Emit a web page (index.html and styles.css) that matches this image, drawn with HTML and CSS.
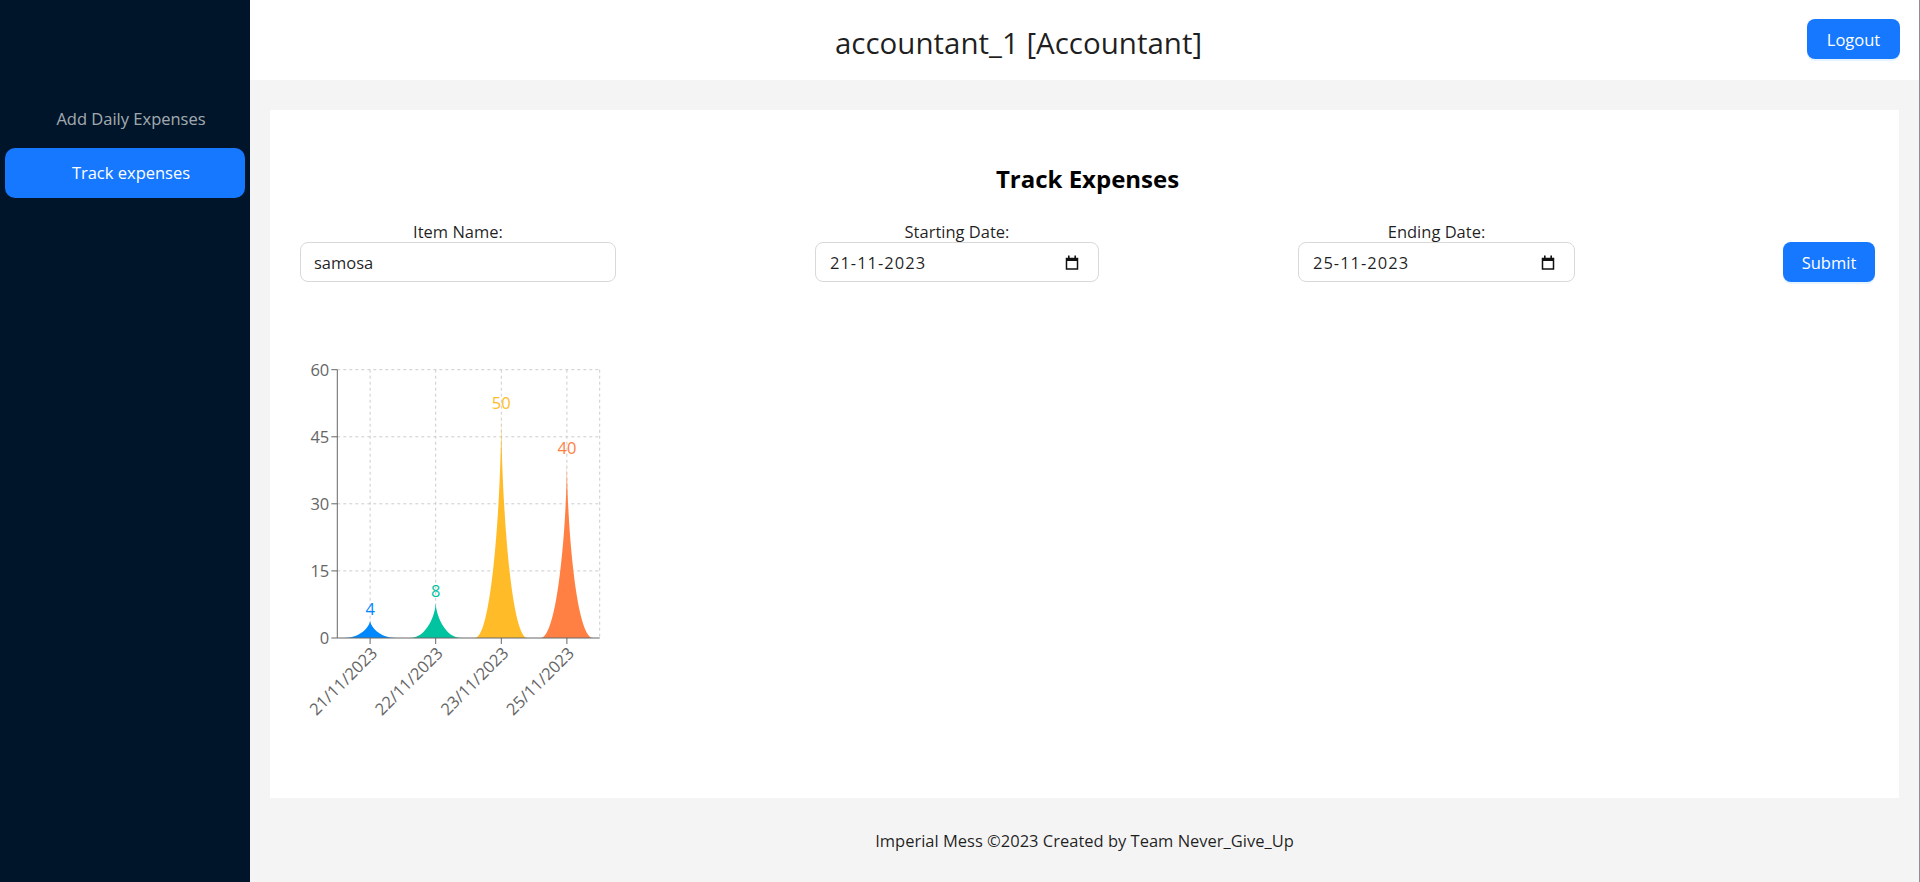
FILE: index.html
```html
<!DOCTYPE html>
<html lang="en">
<head>
<meta charset="utf-8">
<title>Track Expenses</title>
<link rel="stylesheet" href="styles.css">
</head>
<body>
<div class="layout">
  <aside class="sider">
    <nav class="menu">
      <div class="menu-item">Add Daily Expenses</div>
      <div class="menu-item active">Track expenses</div>
    </nav>
  </aside>
  <div class="main">
    <header class="header">
      <div class="user-title">accountant_1 [Accountant]</div>
      <button class="btn btn-logout">Logout</button>
    </header>
    <main class="content">
      <section class="card">
        <h2 class="card-title">Track Expenses</h2>
        <div class="filter-row">
          <div class="field">
            <label class="field-label">Item Name:</label>
            <input class="input input-item" type="text" value="samosa">
          </div>
          <div class="field field-date">
            <label class="field-label">Starting Date:</label>
            <div class="input date-input date-start">
              <span>21-11-2023</span>
              <svg class="cal" width="14" height="15" viewBox="0 0 14 15"><rect x="1.5" y="3.5" width="11" height="10.5" fill="none" stroke="#111" stroke-width="1.5"/><rect x="1" y="3" width="12" height="3" fill="#111"/><rect x="3" y="0.5" width="1.6" height="3" fill="#111"/><rect x="9.4" y="0.5" width="1.6" height="3" fill="#111"/></svg>
            </div>
          </div>
          <div class="field field-date">
            <label class="field-label">Ending Date:</label>
            <div class="input date-input date-end">
              <span>25-11-2023</span>
              <svg class="cal" width="14" height="15" viewBox="0 0 14 15"><rect x="1.5" y="3.5" width="11" height="10.5" fill="none" stroke="#111" stroke-width="1.5"/><rect x="1" y="3" width="12" height="3" fill="#111"/><rect x="3" y="0.5" width="1.6" height="3" fill="#111"/><rect x="9.4" y="0.5" width="1.6" height="3" fill="#111"/></svg>
            </div>
          </div>
          <button class="btn btn-submit">Submit</button>
        </div>
        <svg class="chart" width="320" height="400" viewBox="301 350 320 400">
          <g stroke="#ccc" stroke-dasharray="3 3" fill="none">
            <line x1="338.3" y1="370.7" x2="600.7" y2="370.7"/>
            <line x1="338.3" y1="437.8" x2="600.7" y2="437.8"/>
            <line x1="338.3" y1="504.8" x2="600.7" y2="504.8"/>
            <line x1="338.3" y1="571.9" x2="600.7" y2="571.9"/>
            <line x1="371.1" y1="370.7" x2="371.1" y2="639"/>
            <line x1="436.7" y1="370.7" x2="436.7" y2="639"/>
            <line x1="502.3" y1="370.7" x2="502.3" y2="639"/>
            <line x1="567.9" y1="370.7" x2="567.9" y2="639"/>
            <line x1="600.7" y1="370.7" x2="600.7" y2="639"/>
          </g>
          <path fill="#0088FE" d="M344.85,639 C362.35,639 371.1,627.1 371.1,621.1 C371.1,627.1 379.85,639 397.35,639 Z"/>
          <path fill="#00C49F" d="M410.45,639 C427.95,639 436.7,615.1 436.7,603.2 C436.7,615.1 445.45,639 462.95,639 Z"/>
          <path fill="#FFBB28" d="M476.05,639 C493.55,639 502.3,490 502.3,415.4 C502.3,490 511.05,639 528.55,639 Z"/>
          <path fill="#FF8042" d="M541.65,639 C559.15,639 567.9,519.7 567.9,460.1 C567.9,519.7 576.65,639 594.15,639 Z"/>
          <g class="bar-labels" text-anchor="middle">
            <text x="371.1" y="615.6" fill="#0088FE">4</text>
            <text x="436.7" y="597.7" fill="#00C49F">8</text>
            <text x="502.3" y="409.9" fill="#FFBB28">50</text>
            <text x="567.9" y="454.6" fill="#FF8042">40</text>
          </g>
          <g stroke="#666" fill="none">
            <line x1="338.3" y1="370.7" x2="338.3" y2="639"/>
            <line x1="332.3" y1="370.7" x2="338.3" y2="370.7"/>
            <line x1="332.3" y1="437.8" x2="338.3" y2="437.8"/>
            <line x1="332.3" y1="504.8" x2="338.3" y2="504.8"/>
            <line x1="332.3" y1="571.9" x2="338.3" y2="571.9"/>
            <line x1="332.3" y1="639" x2="338.3" y2="639"/>
            <line x1="338.3" y1="639" x2="600.7" y2="639"/>
            <line x1="371.1" y1="639" x2="371.1" y2="645"/>
            <line x1="436.7" y1="639" x2="436.7" y2="645"/>
            <line x1="502.3" y1="639" x2="502.3" y2="645"/>
            <line x1="567.9" y1="639" x2="567.9" y2="645"/>
          </g>
          <g class="axis-text" text-anchor="end">
            <text x="330.3" y="370.7" dy="0.355em">60</text>
            <text x="330.3" y="437.8" dy="0.355em">45</text>
            <text x="330.3" y="504.8" dy="0.355em">30</text>
            <text x="330.3" y="571.9" dy="0.355em">15</text>
            <text x="330.3" y="639" dy="0.355em">0</text>
            <text x="371.1" y="647" dy="0.71em" transform="rotate(-45 371.1 647)">21/11/2023</text>
            <text x="436.7" y="647" dy="0.71em" transform="rotate(-45 436.7 647)">22/11/2023</text>
            <text x="502.3" y="647" dy="0.71em" transform="rotate(-45 502.3 647)">23/11/2023</text>
            <text x="567.9" y="647" dy="0.71em" transform="rotate(-45 567.9 647)">25/11/2023</text>
          </g>
        </svg>
      </section>
    </main>
    <footer class="footer">Imperial Mess ©2023 Created by Team Never_Give_Up</footer>
  </div>
</div>
</body>
</html>
```

FILE: styles.css
```css
* { box-sizing: border-box; }

html, body {
  margin: 0;
  padding: 0;
  height: 100%;
}

body {
  font-family: "Open Sans", "Noto Sans", sans-serif;
  font-size: 16.5px;
  color: rgba(0, 0, 0, 0.88);
  overflow: hidden;
}

.layout {
  display: flex;
  height: 882px;
  border-right: 1px solid #8a8f99;
}

.sider {
  width: 250px;
  flex: 0 0 250px;
  background: #001529;
  padding-top: 89px;
}

.menu {
  display: flex;
  flex-direction: column;
  gap: 4px;
  padding: 5px 5px;
}

.menu-item {
  height: 50px;
  line-height: 50px;
  border-radius: 10px;
  text-align: center;
  padding-left: 12px;
  color: rgba(255, 255, 255, 0.65);
  font-size: 16.5px;
}

.menu-item.active {
  background: #1677ff;
  color: #fff;
}

.main {
  flex: 1;
  display: flex;
  flex-direction: column;
  background: #f4f4f4;
  min-width: 0;
}

.header {
  height: 80px;
  flex: 0 0 80px;
  background: #fff;
  display: flex;
  align-items: center;
  gap: 20px;
  padding-right: 19px;
}

.user-title {
  flex: 1;
  text-align: center;
  font-size: 29.5px;
  line-height: 40px;
  padding-top: 5px;
  color: rgba(0, 0, 0, 0.88);
}

.btn {
  font-family: inherit;
  font-size: 16.5px;
  height: 40px;
  padding: 0 19px;
  border: none;
  border-radius: 8px;
  background: #1677ff;
  color: #fff;
  box-shadow: 0 2px 0 rgba(5, 145, 255, 0.1);
  cursor: pointer;
}

.btn-logout {
  width: 93px;
  padding: 0;
  margin-bottom: 2px;
}

.content {
  margin: 30px 20px 0;
  flex: 1;
  display: flex;
}

.card {
  flex: 1;
  background: #fff;
  padding: 30px 24px 0 30px;
}

.card-title {
  margin: 22px 0 0;
  text-align: center;
  font-size: 24px;
  line-height: 34px;
  font-weight: 700;
  color: #000;
}

.filter-row {
  margin-top: 25px;
  display: flex;
  align-items: flex-end;
}

.field {
  display: flex;
  flex-direction: column;
  align-items: center;
}

.field-date {
  margin-left: 199px;
}

.field-label {
  font-size: 16.5px;
  line-height: 21px;
  color: rgba(0, 0, 0, 0.88);
}

.input {
  height: 40px;
  border: 1px solid #d9d9d9;
  border-radius: 8px;
  padding: 0 13px;
  font-family: inherit;
  font-size: 16.5px;
  color: rgba(0, 0, 0, 0.88);
  background: #fff;
  outline: none;
}

.input-item { width: 316px; }

.date-input {
  display: flex;
  align-items: center;
  justify-content: space-between;
  padding: 0 19px 0 14px;
  letter-spacing: 1px;
}

.date-start { width: 284px; }
.date-end { width: 277px; }

.cal { display: block; }

.btn-submit {
  width: 92px;
  padding: 0;
  margin-left: auto;
}

.chart {
  display: block;
  margin-top: 67px;
  overflow: visible;
}

.chart text {
  font-family: "Open Sans", "Noto Sans", sans-serif;
  font-size: 16.5px;
}

.axis-text { fill: #666; }

.footer {
  flex: 0 0 84px;
  display: flex;
  align-items: center;
  justify-content: center;
  font-size: 16.5px;
  color: rgba(0, 0, 0, 0.88);
}
```
